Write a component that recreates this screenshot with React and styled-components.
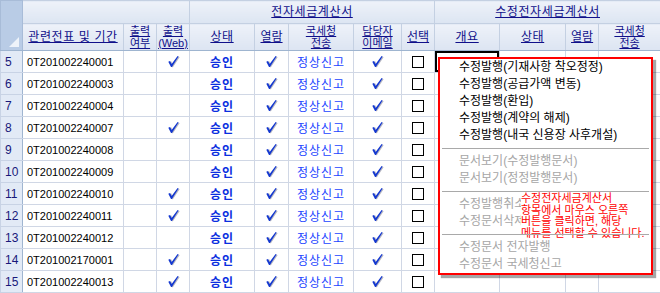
import React from "react";
import styled, { createGlobalStyle } from "styled-components";

const GlobalStyle = createGlobalStyle`
  html, body { margin: 0; padding: 0; background: #ffffff; }
  body { font-family: "Liberation Sans", "Noto Sans CJK KR", sans-serif; }
`;

const widths = [22, 101, 33, 33, 65, 34, 65, 48, 33, 65, 66, 33, 62];

const rows = [
  { no: 5, id: "0T201002240001", web: true },
  { no: 6, id: "0T201002240003", web: false },
  { no: 7, id: "0T201002240004", web: false },
  { no: 8, id: "0T201002240007", web: true },
  { no: 9, id: "0T201002240008", web: false },
  { no: 10, id: "0T201002240009", web: false },
  { no: 11, id: "0T201002240010", web: true },
  { no: 12, id: "0T201002240011", web: true },
  { no: 13, id: "0T201002240012", web: false },
  { no: 14, id: "0T201002170001", web: true },
  { no: 15, id: "0T201002240013", web: true },
];

const menuGroups = [
  {
    disabled: false,
    items: [
      "수정발행(기재사항 착오정정)",
      "수정발행(공급가액 변동)",
      "수정발행(환입)",
      "수정발행(계약의 해제)",
      "수정발행(내국 신용장 사후개설)",
    ],
  },
  { disabled: true, items: ["문서보기(수정발행문서)", "문서보기(정정발행문서)"] },
  { disabled: true, items: ["수정발행취소", "수정문서삭제"] },
  { disabled: true, items: ["수정문서 전자발행", "수정문서 국세청신고"] },
];

const Page = styled.div`
  position: relative;
  width: 660px;
  height: 293px;
  overflow: hidden;
  background: #ffffff;
`;

const Grid = styled.table`
  width: 660px;
  table-layout: fixed;
  border-collapse: collapse;
  font-size: 12px;
`;

const HeadCell = styled.th`
  height: ${(p) => p.$h}px;
  padding: 0;
  box-sizing: border-box;
  background: linear-gradient(#eef2f9, #dce5f2);
  border: 1px solid #c4d0e2;
  border-bottom-color: ${(p) => (p.$bottom ? "#9fb5d0" : "#c4d0e2")};
  border-left-style: ${(p) => (p.$dotLeft ? "dotted" : "solid")};
  border-left-color: ${(p) => (p.$dotLeft ? "#333" : "#c4d0e2")};
  font-weight: normal;
  color: #10108a;
  text-align: center;
  vertical-align: middle;
  white-space: nowrap;
`;

const Corner = styled.th`
  position: relative;
  padding: 0;
  background: #b9cce6;
  border: 1px solid #a8bcd8;
  border-bottom-color: #9fb5d0;

  &::after {
    content: "";
    position: absolute;
    right: 3px;
    bottom: 3px;
    border-style: solid;
    border-width: 0 0 10px 10px;
    border-color: transparent transparent #eef3fa transparent;
  }
`;

const HeadLabel = styled.span`
  display: inline-block;
  text-decoration: underline;
  letter-spacing: ${(p) => (p.$wide ? "0.6px" : "0")};
  font-size: ${(p) => (p.$two ? "11px" : "12px")};
  line-height: ${(p) => (p.$two ? "12px" : "14px")};
`;

const Cell = styled.td`
  height: 22px;
  padding: 0 0 0 ${(p) => (p.$pad ? 4 : 0)}px;
  box-sizing: border-box;
  border: 1px solid #d0d7e5;
  border-right-style: ${(p) => (p.$dotRight ? "dotted" : "solid")};
  border-right-color: ${(p) => (p.$dotRight ? "#333" : "#d0d7e5")};
  border-left-style: ${(p) => (p.$dotLeft ? "dotted" : "solid")};
  border-left-color: ${(p) => (p.$dotLeft ? "#333" : "#d0d7e5")};
  text-align: ${(p) => (p.$pad ? "left" : "center")};
  vertical-align: middle;
  white-space: nowrap;
  color: #000;
  font-size: 11px;
  box-shadow: ${(p) => (p.$selected ? "inset 0 0 0 2px #000" : "none")};
`;

const RowNo = styled.td`
  height: 22px;
  padding: 0 0 0 4px;
  box-sizing: border-box;
  background: #e2eaf6;
  border: 1px solid #c8d3e5;
  border-right-color: #9fb5d0;
  color: #18187a;
  font-size: 12px;
  text-align: left;
`;

const Status = styled.span`
  color: #0b2ee0;
  font-weight: bold;
  font-size: 12px;
  letter-spacing: 1px;
`;

const Report = styled.span`
  color: #2244ff;
  font-size: 12px;
  letter-spacing: 1px;
`;

const Box = styled.span`
  display: inline-block;
  width: 10px;
  height: 10px;
  border: 1px solid #000;
  background: #fff;
  vertical-align: middle;
`;

const Menu = styled.div`
  position: absolute;
  left: 438px;
  top: 57px;
  width: 215px;
  box-sizing: border-box;
  border: 2px solid #ff0000;
  background: #ffffff;
  box-shadow: 3px 3px 1px rgba(0, 0, 0, 0.35);
  font-size: 12px;
`;

const MenuItem = styled.div`
  height: 17px;
  line-height: 17px;
  padding-left: 19px;
  white-space: nowrap;
  color: ${(p) => (p.$disabled ? "#a6a6a6" : "#000")};
`;

const Separator = styled.div`
  position: relative;
  z-index: 2;
  height: 1px;
  margin: 4px 2px 4px 2px;
  background: #a9a9a9;
`;

const Note = styled.div`
  position: absolute;
  z-index: 1;
  left: 81px;
  top: 134px;
  width: 130px;
  background: #ffffff;
  color: #ff0000;
  font-size: 11px;
  line-height: 11.5px;
  white-space: nowrap;
`;

const Check = () => (
  <svg width="13" height="13" viewBox="0 0 13 13" style={{ verticalAlign: "middle" }}>
    <path d="M2.5 7 L4.2 6.3 L5.6 9.2 L11.6 1.5 L12.6 2.3 L5.9 12.2 L5 12.2 Z" fill="#b8b8c0" />
    <path d="M1.3 6.8 L3 6 L4.6 9 L10.6 1 L11.6 1.6 L4.9 12 L4 12 Z" fill="#1438d0" />
  </svg>
);

const twoLine = (a, b) => (
  <HeadLabel $two>
    {a}
    <br />
    {b}
  </HeadLabel>
);

export default function App() {
  return (
    <Page>
      <GlobalStyle />
      <Grid>
        <colgroup>
          {widths.map((w, i) => (
            <col key={i} style={{ width: w }} />
          ))}
        </colgroup>
        <thead>
          <tr>
            <Corner rowSpan={2} />
            <HeadCell $h={23} colSpan={3} />
            <HeadCell $h={23} colSpan={5} $dotLeft>
              <HeadLabel $wide>전자세금계산서</HeadLabel>
            </HeadCell>
            <HeadCell $h={23} colSpan={4}>
              <HeadLabel $wide>수정전자세금계산서</HeadLabel>
            </HeadCell>
          </tr>
          <tr>
            <HeadCell $h={27} $bottom>
              <HeadLabel $wide>관련전표 및 기간</HeadLabel>
            </HeadCell>
            <HeadCell $h={27} $bottom>{twoLine("출력", "여부")}</HeadCell>
            <HeadCell $h={27} $bottom>{twoLine("출력", "(Web)")}</HeadCell>
            <HeadCell $h={27} $bottom $dotLeft>
              <HeadLabel $wide>상태</HeadLabel>
            </HeadCell>
            <HeadCell $h={27} $bottom>
              <HeadLabel>열람</HeadLabel>
            </HeadCell>
            <HeadCell $h={27} $bottom>{twoLine("국세청", "전송")}</HeadCell>
            <HeadCell $h={27} $bottom>{twoLine("담당자", "이메일")}</HeadCell>
            <HeadCell $h={27} $bottom>
              <HeadLabel>선택</HeadLabel>
            </HeadCell>
            <HeadCell $h={27} $bottom>
              <HeadLabel $wide>개요</HeadLabel>
            </HeadCell>
            <HeadCell $h={27} $bottom>
              <HeadLabel $wide>상태</HeadLabel>
            </HeadCell>
            <HeadCell $h={27} $bottom>
              <HeadLabel>열람</HeadLabel>
            </HeadCell>
            <HeadCell $h={27} $bottom>{twoLine("국세청", "전송")}</HeadCell>
          </tr>
        </thead>
        <tbody>
          {rows.map((r, i) => (
            <tr key={r.no}>
              <RowNo>{r.no}</RowNo>
              <Cell $pad>{r.id}</Cell>
              <Cell />
              <Cell $dotRight>{r.web && <Check />}</Cell>
              <Cell>
                <Status>승인</Status>
              </Cell>
              <Cell>
                <Check />
              </Cell>
              <Cell>
                <Report>정상신고</Report>
              </Cell>
              <Cell>
                <Check />
              </Cell>
              <Cell>
                <Box />
              </Cell>
              <Cell $dotLeft $selected={i === 0} />
              <Cell />
              <Cell />
              <Cell />
            </tr>
          ))}
        </tbody>
      </Grid>

      <Menu>
        {menuGroups.map((g, gi) => (
          <React.Fragment key={gi}>
            {gi > 0 && <Separator />}
            {g.items.map((label) => (
              <MenuItem key={label} $disabled={g.disabled}>
                {label}
              </MenuItem>
            ))}
          </React.Fragment>
        ))}
        <Note>
          수정전자세금계산서
          <br />
          항목에서 마우스 오른쪽
          <br />
          버튼을 클릭하면, 해당
          <br />
          메뉴를 선택할 수 있습니다.
        </Note>
      </Menu>
    </Page>
  );
}
